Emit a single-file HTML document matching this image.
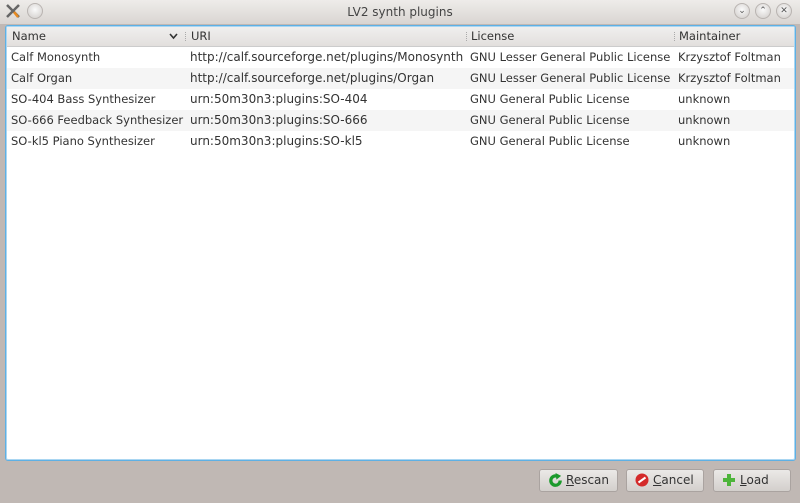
<!DOCTYPE html>
<html><head><style>
body{margin:0;width:800px;height:503px;background:#c0b8b4;font-family:"DejaVu Sans","Liberation Sans",sans-serif;font-size:11.5px;color:#333;position:relative;overflow:hidden}
.title{position:absolute;left:0;top:0;width:800px;height:24px;background:linear-gradient(#eeecea,#d9d5d2);}
.title .t{position:absolute;left:0;width:800px;top:5px;text-align:center;color:#444;font-size:12px}
.cb{position:absolute;top:3px;width:14px;height:14px;border-radius:50%;background:radial-gradient(circle at 50% 40%,#fafafa,#cfcbc8);border:1px solid #b9b4b1;font-size:9px;line-height:14px;text-align:center;color:#555}
.frame{position:absolute;left:5px;top:25px;width:789px;height:434px;border:1px solid #5eb0e4;border-radius:3px;background:#fff;box-shadow:0 0 0 1px #a9d6f2 inset;overflow:hidden}
.hdr{position:absolute;left:1px;top:1px;right:1px;height:19px;background:linear-gradient(#f0efee,#e2dfdd);border-bottom:1px solid #ccc}
.hdr span,.row span{position:absolute;top:2px;white-space:nowrap}
.hdr span{color:#333}
.sep{position:absolute;top:5px;width:1px;height:9px;border-left:1px dotted #aaa}
.row{position:absolute;left:1px;right:1px;height:21px}
.row span{top:3px}
.row span.u{font-size:12px;top:3px}
.alt{background:#f5f5f5}
.btn{position:absolute;top:469px;height:21px;border:1px solid #aaa3a0;border-radius:3px;background:linear-gradient(#ebe9e7,#d3cfcc);font-size:12px;line-height:21px;color:#333}
.btn svg{position:absolute;left:8px;top:3px}
.btn b{font-weight:normal;position:absolute;left:26px}
</style></head><body>
<div class="title">
<svg style="position:absolute;left:6px;top:4px" width="14" height="14" viewBox="0 0 14 14"><path d="M1 1 L13 13 M13 1 L1 13" stroke="#666" stroke-width="2.5"/><path d="M8 8 L12 13" stroke="#e88a20" stroke-width="2.5"/></svg>
<div class="cb" style="left:27px"></div>
<div class="t">LV2 synth plugins</div>
<div class="cb" style="left:734px">⌄</div>
<div class="cb" style="left:755px">⌃</div>
<div class="cb" style="left:776px">✕</div>
</div>
<div class="frame">
<div class="hdr">
<span style="left:5px">Name</span>
<svg style="position:absolute;left:162px;top:6px" width="9" height="7"><path d="M1 1 L4.5 5 L8 1" stroke="#333" stroke-width="1.6" fill="none"/></svg>
<div class="sep" style="left:178px"></div><span style="left:184px">URI</span>
<div class="sep" style="left:459px"></div><span style="left:464px">License</span>
<div class="sep" style="left:667px"></div><span style="left:672px">Maintainer</span>
</div>
<div class="row" style="top:21px"><span style="left:4px">Calf Monosynth</span><span class="u" style="left:183px">http://calf.sourceforge.net/plugins/Monosynth</span><span style="left:463px">GNU Lesser General Public License</span><span style="left:671px">Krzysztof Foltman</span></div>
<div class="row alt" style="top:42px"><span style="left:4px">Calf Organ</span><span class="u" style="left:183px">http://calf.sourceforge.net/plugins/Organ</span><span style="left:463px">GNU Lesser General Public License</span><span style="left:671px">Krzysztof Foltman</span></div>
<div class="row" style="top:63px"><span style="left:4px">SO-404 Bass Synthesizer</span><span class="u" style="left:183px">urn:50m30n3:plugins:SO-404</span><span style="left:463px">GNU General Public License</span><span style="left:671px">unknown</span></div>
<div class="row alt" style="top:84px"><span style="left:4px">SO-666 Feedback Synthesizer</span><span class="u" style="left:183px">urn:50m30n3:plugins:SO-666</span><span style="left:463px">GNU General Public License</span><span style="left:671px">unknown</span></div>
<div class="row" style="top:105px"><span style="left:4px">SO-kl5 Piano Synthesizer</span><span class="u" style="left:183px">urn:50m30n3:plugins:SO-kl5</span><span style="left:463px">GNU General Public License</span><span style="left:671px">unknown</span></div>
</div>
<div class="btn" style="left:539px;width:77px"><svg width="15" height="15" viewBox="0 0 16 16"><path d="M13 8 A5 5 0 1 1 10 3.5" stroke="#1c9a2c" stroke-width="3.5" fill="none"/><path d="M8 0 L14 3 L9 7Z" fill="#1c9a2c"/></svg><b><u>R</u>escan</b></div>
<div class="btn" style="left:626px;width:76px"><svg width="14" height="14" viewBox="0 0 14 14"><circle cx="7" cy="7" r="6.5" fill="#d42a2a"/><path d="M3.5 9.5 L10.5 4.5" stroke="#fff" stroke-width="2"/></svg><b><u>C</u>ancel</b></div>
<div class="btn" style="left:713px;width:76px"><svg width="14" height="14" viewBox="0 0 14 14"><path d="M7 1 V13 M1 7 H13" stroke="#4db53a" stroke-width="4"/></svg><b><u>L</u>oad</b></div>
</body></html>
